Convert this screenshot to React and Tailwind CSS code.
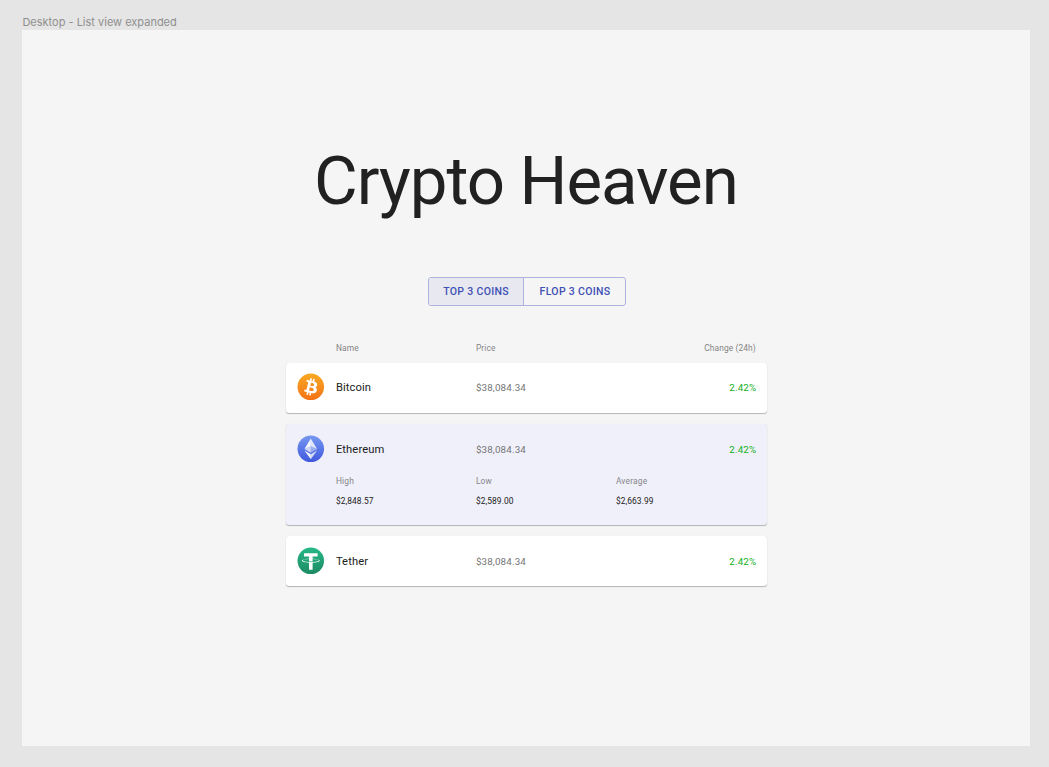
function Disc({ id, from, to, children }) {
  return (
    <svg viewBox="-0.6 -0.6 33.7 33.7" className="block size-[28px]">
      <defs>
        <linearGradient id={id} x1="0" y1="0" x2="0" y2="1">
          <stop offset="0" stopColor={from} />
          <stop offset="1" stopColor={to} />
        </linearGradient>
      </defs>
      <circle cx="16" cy="16" r="16" fill={`url(#${id})`} />
      {children}
    </svg>
  );
}

function BitcoinIcon() {
  return (
    <Disc id="btc" from="#f9aa24" to="#f47216">
      <path
        fill="#fff"
        transform="translate(-0.9 -0.9) scale(1.06)"
        d="M23.189 14.02c.314-2.096-1.283-3.223-3.465-3.975l.708-2.84-1.728-.43-.69 2.765c-.454-.114-.92-.22-1.385-.326l.695-2.783L15.596 6l-.708 2.839c-.376-.086-.746-.17-1.104-.26l.002-.009-2.384-.595-.46 1.846s1.283.294 1.256.312c.7.175.826.638.805 1.006l-.806 3.235c.048.012.11.03.18.057l-.183-.045-1.13 4.532c-.086.212-.303.531-.793.41.018.025-1.256-.313-1.256-.313l-.858 1.978 2.25.561c.418.105.828.215 1.231.318l-.715 2.872 1.727.43.708-2.84c.472.127.93.245 1.378.357l-.706 2.828 1.728.43.715-2.866c2.948.558 5.164.333 6.097-2.333.752-2.146-.037-3.385-1.588-4.192 1.13-.26 1.98-1.003 2.207-2.538zm-3.95 5.538c-.533 2.147-4.148.986-5.32.695l.95-3.805c1.172.293 4.929.872 4.37 3.11zm.535-5.569c-.487 1.953-3.495.96-4.47.717l.86-3.45c.975.243 4.118.696 3.61 2.733z"
      />
    </Disc>
  );
}

function EthereumIcon() {
  return (
    <Disc id="eth" from="#7697f0" to="#4059df">
      <g fill="#fff">
        <path fillOpacity=".95" d="M16 3.6v9.3l-7.6 3.5z" />
        <path fillOpacity=".8" d="M16 3.6l7.6 12.8-7.6-3.5z" />
        <path fillOpacity=".7" d="M16 12.9v8l-7.6-4.5z" />
        <path fillOpacity=".4" d="M16 12.9l7.6 3.5-7.6 4.5z" />
        <path fillOpacity=".95" d="M8.4 18l7.6 4.5v6.2z" />
        <path fillOpacity=".75" d="M23.6 18L16 22.5v6.2z" />
      </g>
    </Disc>
  );
}

function TetherIcon() {
  return (
    <Disc id="usdt" from="#27b887" to="#1d8a62">
      <path
        fill="#fff"
        transform="translate(-1.7 -1.7) scale(1.11)"
        d="M17.922 17.383v-.002c-.11.008-.677.042-1.942.042-1.01 0-1.721-.03-1.971-.042v.003c-3.888-.171-6.79-.848-6.79-1.658 0-.809 2.902-1.486 6.79-1.66v2.644c.254.018.982.061 1.988.061 1.207 0 1.812-.05 1.925-.06v-2.643c3.88.173 6.775.85 6.775 1.658 0 .81-2.895 1.485-6.775 1.657m0-3.59v-2.366h5.414V7.819H8.595v3.608h5.414v2.365c-4.4.202-7.709 1.074-7.709 2.118 0 1.044 3.309 1.915 7.709 2.118v7.582h3.913v-7.584c4.393-.202 7.694-1.073 7.694-2.116 0-1.043-3.301-1.914-7.694-2.117"
      />
    </Disc>
  );
}

const coins = [
  { name: "Bitcoin", Icon: BitcoinIcon },
  {
    name: "Ethereum",
    Icon: EthereumIcon,
    stats: [
      ["High", "$2,848.57"],
      ["Low", "$2,589.00"],
      ["Average", "$2,663.99"],
    ],
  },
  { name: "Tether", Icon: TetherIcon },
];

function CoinCard({ name, Icon, stats }) {
  return (
    <article
      className={`rounded-[3px] shadow-[0_1px_1px_rgba(0,0,0,0.26),0_0_1px_rgba(0,0,0,0.1)] ${
        stats ? "h-[100.5px] bg-[#f0f0fa]" : "h-[50px] bg-white"
      }`}
    >
      <div className="flex h-[49px] items-center pr-[10.6px] pl-[11px]">
        <div className="w-[39px]">
          <Icon />
        </div>
        <h2 className="w-[140px] pt-[2.5px] text-[11.2px] leading-[16px] tracking-[0.1px] text-[#212121]">{name}</h2>
        <span className="pt-[2.5px] text-[9.8px] leading-[14px] tracking-[0.15px] text-[#757575]">$38,084.34</span>
        <span className="ml-auto pt-[2.5px] text-[9.8px] leading-[14px] tracking-[0.15px] text-[#12b01a]">2.42%</span>
      </div>
      {stats && (
        <dl className="grid grid-cols-[140px_140px_140px] pt-[3px] pl-[50px] text-[8.4px] leading-[11px]">
          {stats.map(([label, value]) => (
            <div key={label}>
              <dt className="tracking-[0.2px] text-[#858589]">{label}</dt>
              <dd className="mt-[9px] tracking-[0.1px] text-[#212121]">{value}</dd>
            </div>
          ))}
        </dl>
      )}
    </article>
  );
}

export default function App() {
  return (
    <div className="flex h-[767px] w-[1049px] flex-col bg-[#e5e5e5] pl-[22.4px]">
      <div className="h-[29.6px] pt-[15px] font-['Inter',sans-serif] text-[11px] leading-[14px] text-[#8f8f8f]">
        Desktop - List view expanded
      </div>
      <main className="flex h-[716.8px] w-[1008px] flex-col items-center bg-[#f5f5f5] font-['Roboto',sans-serif]">
        <h1 className="mt-[112px] pr-px text-[67.2px] leading-[79px] tracking-[-1.05px] text-[#212121]">
          Crypto Heaven
        </h1>
        <div className="mt-[56px] ml-[1px] flex h-[29.5px] w-[198px] overflow-hidden rounded-[3px] border border-[#adb3dc] text-[10.5px] font-medium tracking-[0.32px] text-[#3f51b5]">
          <button className="w-[95.4px] border-r border-[#adb3dc] bg-[#e8e8f1] pt-[2px]">TOP 3 COINS</button>
          <button className="flex-1 pt-[2px] pl-px">FLOP 3 COINS</button>
        </div>
        <section className="mt-[36.8px] w-[481px]">
          <div className="flex h-[19.8px] pr-[11px] pl-[50px] text-[8.4px] leading-[11px] tracking-[0.12px] text-[#858585]">
            <span className="w-[140px]">Name</span>
            <span>Price</span>
            <span className="ml-auto">Change (24h)</span>
          </div>
          <div className="flex flex-col gap-[11.6px]">
            {coins.map((coin) => (
              <CoinCard key={coin.name} {...coin} />
            ))}
          </div>
        </section>
      </main>
    </div>
  );
}
